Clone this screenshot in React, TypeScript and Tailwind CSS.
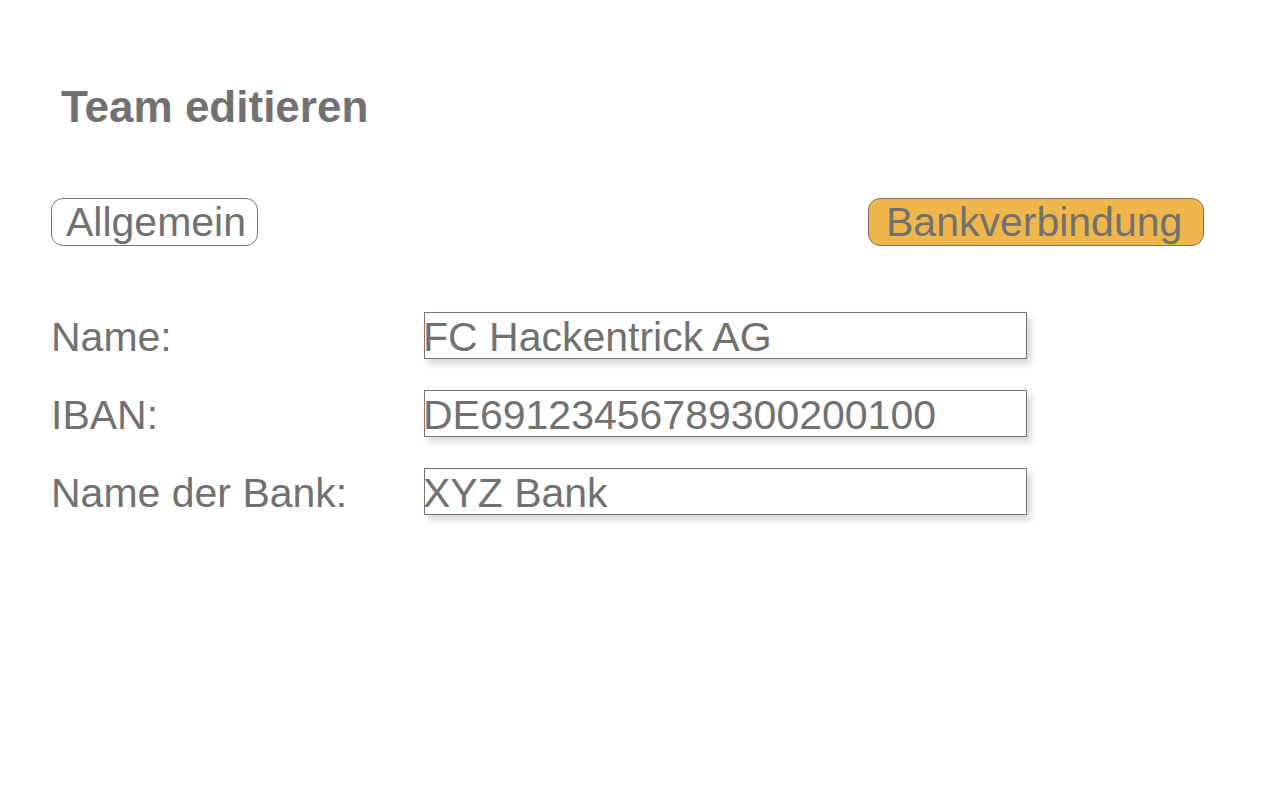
import React from "react";

const rows = [
  { label: "Name:", value: "FC Hackentrick AG" },
  { label: "IBAN:", value: "DE69123456789300200100" },
  { label: "Name der Bank:", value: "XYZ Bank" },
];

export default function App() {
  return (
    <div
      className="w-full h-[800px] bg-white text-[#717171] pl-[51px] pr-[76px] pt-[85px]"
      style={{ fontFamily: '"Liberation Sans", Arial, Helvetica, sans-serif' }}
    >
      <h1 className="ml-[10px] text-[44px] leading-none font-bold">Team editieren</h1>

      <div className="mt-[69px] flex justify-between">
        <button className="h-[48px] w-[207px] border border-[#747474] rounded-[12px] bg-white flex items-start pt-[3px] pl-[14px] text-[41px] leading-none text-[#717171]">
          Allgemein
        </button>
        <button className="h-[48px] w-[336px] border border-[#747474] rounded-[12px] bg-[#f0b64b] flex items-start pt-[3px] pl-[17px] text-[41px] leading-none text-[#717171]">
          Bankverbindung
        </button>
      </div>

      <div className="mt-[66px] flex flex-col gap-[31px]">
        {rows.map((r) => (
          <div key={r.label} className="flex h-[47px]">
            <div className="w-[373px] pt-[5px] text-[41px] leading-none">{r.label}</div>
            <div className="w-[603px] h-[47px] border border-[#747474] bg-white shadow-[4px_5px_7px_rgba(0,0,0,0.16)] pt-[4px] text-[41px] leading-none overflow-hidden">
              <span className="block -ml-[2px]">{r.value}</span>
            </div>
          </div>
        ))}
      </div>
    </div>
  );
}
